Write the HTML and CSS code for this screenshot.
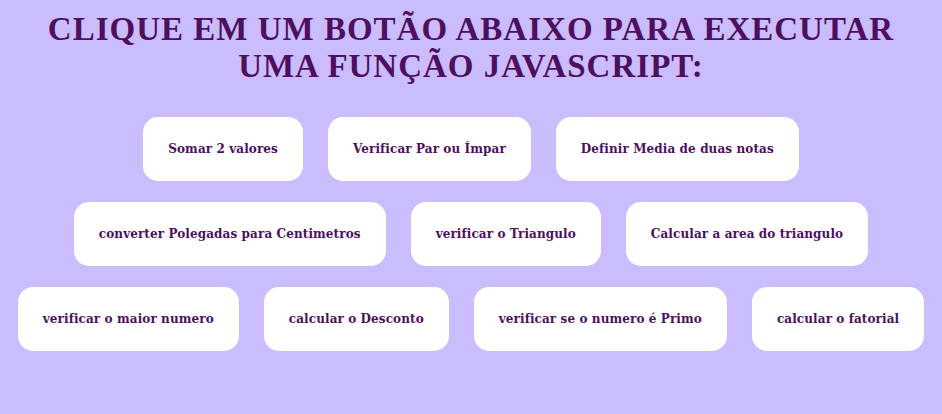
FILE: index.html
```html
<!DOCTYPE html>
<html lang="pt-BR">
<head>
<meta charset="utf-8">
<title>Funções JavaScript</title>
<link rel="stylesheet" href="styles.css">
</head>
<body>
<h1 class="title">CLIQUE EM UM BOTÃO ABAIXO PARA EXECUTAR UMA FUNÇÃO JAVASCRIPT:</h1>
<div class="buttons">
  <div class="row">
    <button class="btn">Somar 2 valores</button>
    <button class="btn">Verificar Par ou Ímpar</button>
    <button class="btn">Definir Media de duas notas</button>
  </div>
  <div class="row">
    <button class="btn">converter Polegadas para Centimetros</button>
    <button class="btn">verificar o Triangulo</button>
    <button class="btn">Calcular a area do triangulo</button>
  </div>
  <div class="row">
    <button class="btn">verificar o maior numero</button>
    <button class="btn">calcular o Desconto</button>
    <button class="btn">verificar se o numero é Primo</button>
    <button class="btn">calcular o fatorial</button>
  </div>
</div>
</body>
</html>
```
FILE: styles.css
```css
html, body {
  background: #cbbdfd;
}
body {
  margin: 8px;
}
.title {
  font-family: "Liberation Serif", serif;
  font-weight: bold;
  font-size: 33px;
  line-height: 37px;
  letter-spacing: 1px;
  color: #4d0f5e;
  text-align: center;
  margin: 3px 20px 0;
}
.buttons {
  display: flex;
  flex-direction: column;
  gap: 21px;
  margin-top: 32px;
}
.row {
  display: flex;
  justify-content: center;
  gap: 25px;
}
.btn {
  font-family: "DejaVu Serif", serif;
  font-weight: bold;
  font-size: 12px;
  letter-spacing: 0.1px;
  color: #4d0f5e;
  background: #ffffff;
  border: none;
  border-radius: 15px;
  height: 64px;
  padding: 0 25px;
  cursor: pointer;
}
```
